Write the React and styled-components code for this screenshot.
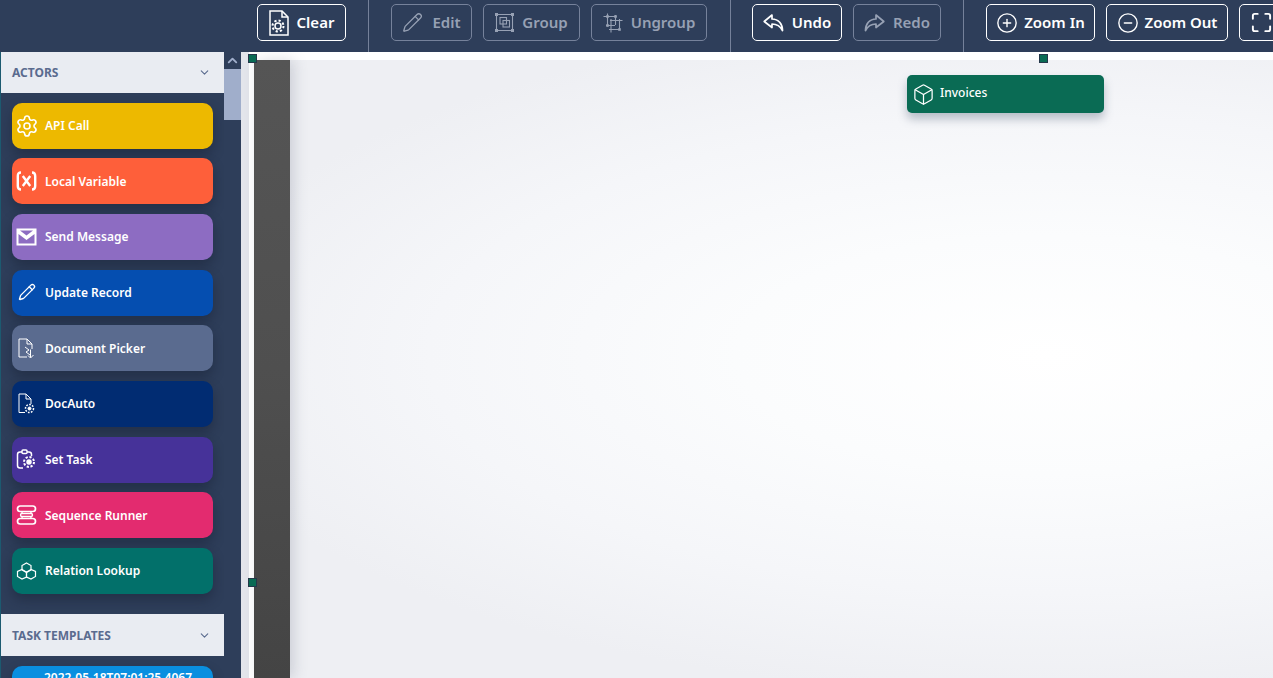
import React from "react";
import styled, { createGlobalStyle } from "styled-components";
import {
  Settings,
  Pencil,
  CirclePlus,
  CircleMinus,
  Maximize,
  Box,
  ChevronDown,
  ChevronUp,
} from "lucide-react";

const GlobalStyle = createGlobalStyle`
  html, body {
    margin: 0;
    height: 100%;
    overflow: hidden;
    font-family: "Noto Sans", "Open Sans", sans-serif;
  }
  #root {
    height: 100%;
  }
`;

const Page = styled.div`
  display: flex;
  flex-direction: column;
  width: 1273px;
  height: 678px;
  overflow: hidden;
  background: #2e3e5a;
`;

const Toolbar = styled.div`
  display: flex;
  flex: 0 0 52px;
  height: 52px;
  padding-left: 257px;
  background: #2e3e5a;
`;

const ToolGroup = styled.div`
  display: flex;
  align-items: flex-start;
  gap: 11px;
  padding: 4px ${(p) => p.$pr || 22}px 0 ${(p) => p.$pl || 22}px;
  border-left: 1px solid #75819a;

  &:first-child {
    padding-left: 0;
    border-left: none;
  }
`;

const ToolButton = styled.button`
  display: flex;
  align-items: center;
  justify-content: center;
  gap: ${(p) => p.$gap || 8}px;
  flex: none;
  box-sizing: border-box;
  height: 37px;
  width: ${(p) => p.$w}px;
  padding: 0 0 2px;
  background: transparent;
  border: 1px solid ${(p) => (p.disabled ? "#76829b" : "#ffffff")};
  border-radius: 5px;
  color: ${(p) => (p.disabled ? "#97a1b4" : "#ffffff")};
  font-family: inherit;
  font-size: 15px;
  font-weight: 600;

  svg {
    flex: none;
    margin-top: 2px;
  }
`;

const Body = styled.div`
  display: flex;
  flex: 1;
  min-height: 0;
`;

const Sidebar = styled.div`
  display: flex;
  flex: 0 0 241px;
  box-sizing: border-box;
  padding-left: 1px;
  overflow: hidden;
  background: #2e3e5a;
  box-shadow: inset 1px 0 0 #1c5a70;
`;

const Panels = styled.div`
  flex: 0 0 223px;
  overflow: hidden;
`;

const PanelHeader = styled.div`
  display: flex;
  align-items: center;
  justify-content: space-between;
  box-sizing: border-box;
  height: ${(p) => p.$h}px;
  padding: ${(p) => (p.$h - 41) * 2}px 13px 0 11px;
  background: #e9ecf2;
  color: #5a6b8f;
  font-size: 12px;
  font-weight: 700;
`;

const ActorList = styled.div`
  display: flex;
  flex-direction: column;
  gap: 9.65px;
  padding: 9.7px 11px 20.1px;
`;

const Actor = styled.div`
  display: flex;
  align-items: center;
  flex: none;
  gap: 8px;
  height: 46px;
  width: 201px;
  box-sizing: border-box;
  padding: 0 0 0.3px 4px;
  background: ${(p) => p.$bg};
  border-radius: 10px;
  box-shadow: 0 6px 12px rgba(20, 28, 45, 0.4);
  color: #ffffff;
  font-size: 12px;
  font-weight: 600;
  line-height: 17px;
`;

const ActorIcon = styled.span`
  display: flex;
  align-items: center;
  justify-content: center;
  flex: 0 0 21px;
  width: 21px;
  height: 24px;

  svg {
    flex: none;
  }
`;

const TemplateActor = styled(Actor)`
  align-items: flex-start;
  padding: 3px 0 0 32px;
  white-space: nowrap;
`;

const Scrollbar = styled.div`
  display: flex;
  flex-direction: column;
  flex: 0 0 17px;
`;

const ScrollUp = styled.div`
  display: flex;
  align-items: center;
  justify-content: center;
  height: 17px;
  color: #a0aecb;
`;

const ScrollThumb = styled.div`
  height: 51px;
  background: #a0aecb;
`;

const Canvas = styled.div`
  position: relative;
  display: flex;
  flex: 1;
  min-width: 0;
  overflow: hidden;
  background: #e3e5eb;
`;

const Sheet = styled.div`
  display: flex;
  flex: 1;
  margin-left: 8px;
  padding: 8px 0 0 5px;
  background: #ffffff;
`;

const Surface = styled.div`
  display: flex;
  flex: 1;
  background: radial-gradient(
    ellipse 880px 340px at 791px 295px,
    #ffffff 0%,
    #fbfcfd 35%,
    #f5f6f9 70%,
    #eeeff3 100%
  );
`;

const Lane = styled.div`
  flex: 0 0 36px;
  background: linear-gradient(#555555, #4f4f4f 50%, #444444);
  box-shadow: 4px 0 14px rgba(80, 90, 115, 0.22);
`;

const Handle = styled.span`
  position: absolute;
  left: ${(p) => p.$x}px;
  top: ${(p) => p.$y}px;
  width: 9px;
  height: 9px;
  box-sizing: border-box;
  background: #0a6b54;
  border: 1px solid #24384a;
`;

const Node = styled.div`
  position: absolute;
  left: 666px;
  top: 23px;
  display: flex;
  align-items: flex-start;
  gap: 5px;
  box-sizing: border-box;
  width: 197px;
  height: 38px;
  padding: 9px 0 0 5px;
  background: #0a6b54;
  border-radius: 5px;
  box-shadow: 0 6px 10px rgba(90, 105, 125, 0.4);
  color: #ffffff;
  font-size: 12px;
  font-weight: 500;
  line-height: 17px;
`;

const NodeIcon = styled(Box)`
  flex: none;
  margin-top: -1px;
`;

const ClearIcon = () => (
  <svg width="20" height="26" viewBox="0 0 20 26" fill="none" stroke="#fff" strokeWidth="1.5">
    <path d="M1 1h12l6 6v18H1z" />
    <path d="M13 1v6h6" />
    <circle cx="9" cy="16" r="3" />
    <circle cx="9" cy="16" r="5.500" strokeDasharray="2.200 2.100" strokeWidth="2" />
  </svg>
);

const UndoIcon = () => (
  <svg width="21" height="18" viewBox="0 0 21 18" fill="none" stroke="currentColor" strokeWidth="1.700" strokeLinejoin="round">
    <path d="M9 1L1.200 7.500 9 13.500V10c4.500 0 8 1.500 10.500 6.500C19.500 10 15.500 5 9 5z" />
  </svg>
);

const RedoIcon = () => (
  <svg width="21" height="18" viewBox="0 0 21 18" fill="none" stroke="currentColor" strokeWidth="1.700" strokeLinejoin="round">
    <path d="M12 1l7.800 6.500L12 13.500V10c-4.500 0-8 1.500-10.500 6.500C1.500 10 5.500 5 12 5z" />
  </svg>
);

const GroupIcon = () => (
  <svg width="19" height="19" viewBox="0 0 19 19" fill="none" stroke="#97a1b4" strokeWidth="1.100">
    <path d="M1.500 1.500h16v16h-16z" />
    <rect x="5" y="4.500" width="6.500" height="6.500" />
    <rect x="8" y="7.500" width="6.500" height="6.500" />
    <g fill="#97a1b4" stroke="none">
      <rect x="0" y="0" width="3" height="3" />
      <rect x="16" y="0" width="3" height="3" />
      <rect x="0" y="16" width="3" height="3" />
      <rect x="16" y="16" width="3" height="3" />
    </g>
  </svg>
);

const UngroupIcon = () => (
  <svg width="20" height="20" viewBox="0 0 20 20" fill="none" stroke="#97a1b4" strokeWidth="1.100">
    <path d="M0.500 3.500h13M4.500 0.500v13M3 12.500h9M12.500 2v10" />
    <path d="M7 7.500h12.500M8 6v13.500M6 16.500h11M16.500 6v11" />
    <g fill="#97a1b4" stroke="none">
      <rect x="3.200" y="2.200" width="2.600" height="2.600" />
      <rect x="11.200" y="2.200" width="2.600" height="2.600" />
      <rect x="3.200" y="11.200" width="2.600" height="2.600" />
      <rect x="15.200" y="15.200" width="2.600" height="2.600" />
    </g>
  </svg>
);

const VariableIcon = () => (
  <svg width="21" height="20" viewBox="0 0 21 20" fill="none" stroke="#fff" strokeWidth="2.400">
    <path d="M5 1.500C2.300 1.500 1.800 3 1.800 5v10c0 2 .5 3.500 3.200 3.500" />
    <path d="M16 1.500c2.700 0 3.200 1.500 3.200 3.500v10c0 2-.5 3.500-3.200 3.500" />
    <path d="M6.800 5l7.400 10M14.200 5L6.800 15" />
  </svg>
);

const MailIcon = () => (
  <svg width="21" height="18" viewBox="0 0 21 18" fill="none">
    <rect x="0.500" y="0.500" width="20" height="17" fill="#fff" />
    <path d="M2.500 6l8 6 8-6v9.500h-16z" fill="#8d6cc2" />
    <path d="M4 2.500h13l-6.500 5z" fill="#8d6cc2" />
  </svg>
);

const DocPickIcon = () => (
  <svg width="18" height="21" viewBox="0 0 18 21" fill="none" stroke="#fff" strokeWidth="1">
    <path d="M9 19H1V1h8l5 5v5" />
    <path d="M9 1v5h5" />
    <path d="M7 9l4 3-3 2 4 3" />
    <path d="M12.500 11.500v8M10 17.500l2.500 2.500 3-3" />
  </svg>
);

const DocGearIcon = () => (
  <svg width="18" height="21" viewBox="0 0 18 21" fill="none" stroke="#fff" strokeWidth="1">
    <path d="M7 19.500H1V1h7l5 5v5" />
    <path d="M8 1v5h5" />
    <circle cx="11.500" cy="15.500" r="1.500" fill="#fff" />
    <circle cx="11.500" cy="15.500" r="4" strokeDasharray="1.700 1.300" strokeWidth="1.500" />
  </svg>
);

const TaskIcon = () => (
  <svg width="21" height="21" viewBox="0 0 21 21" fill="none" stroke="#fff" strokeWidth="1.500">
    <path d="M6 3H4C2.500 3 1.500 4 1.500 5.500v11C1.500 18 2.500 19 4 19h3" />
    <path d="M11 3h2c1.500 0 2.500 1 2.500 2.500V7" />
    <rect x="6" y="1" width="5" height="3.500" rx="1" />
    <circle cx="13" cy="13" r="2" fill="#fff" />
    <circle cx="13" cy="13" r="5" strokeDasharray="2.200 1.700" strokeWidth="2" />
  </svg>
);

const SequenceIcon = () => (
  <svg width="21" height="20" viewBox="0 0 21 20" fill="none" stroke="#fff" strokeWidth="1.700">
    <rect x="1.500" y="1" width="18" height="5.500" rx="2.750" />
    <rect x="1.500" y="13.500" width="18" height="5.500" rx="2.750" />
    <path d="M6 6.500v2H15a1.500 1.500 0 0 1 0 3H6v2M15 6.500v2M15 11.500v2M6 8.500a1.500 1.500 0 0 0 0 3" strokeWidth="1.400" />
  </svg>
);

const RelationIcon = () => (
  <svg width="21" height="18" viewBox="0 0 21 18" fill="none" stroke="#fff" strokeWidth="1.200">
    <path d="M10.500 1l4.500 2.500v4.500l-4.500 2.500L6 8V3.500z" />
    <path d="M6 7.500l4.500 2.500v5l-4.500 2-4.500-2.500v-5z" />
    <path d="M15 7.500L10.500 10v5l4.500 2 4.500-2.500v-5z" />
  </svg>
);

const actors = [
  { name: "API Call", bg: "#edb900", icon: <Settings size={24} strokeWidth={1.600} /> },
  { name: "Local Variable", bg: "#fe5f3a", icon: <VariableIcon /> },
  { name: "Send Message", bg: "#8d6cc2", icon: <MailIcon /> },
  { name: "Update Record", bg: "#054eb0", icon: <Pencil size={18} strokeWidth={1.800} /> },
  { name: "Document Picker", bg: "#5a6b8f", icon: <DocPickIcon /> },
  { name: "DocAuto", bg: "#012c72", icon: <DocGearIcon /> },
  { name: "Set Task", bg: "#463299", icon: <TaskIcon /> },
  { name: "Sequence Runner", bg: "#e32b6f", icon: <SequenceIcon /> },
  { name: "Relation Lookup", bg: "#02706a", icon: <RelationIcon /> },
];

const App = () => {
  return (
    <Page>
      <GlobalStyle />
      <Toolbar>
        <ToolGroup>
          <ToolButton $w={89}>
            <ClearIcon />
            Clear
          </ToolButton>
        </ToolGroup>
        <ToolGroup $pr={23}>
          <ToolButton $w={81} $gap={9} disabled>
            <Pencil size={21} strokeWidth={1.500} />
            Edit
          </ToolButton>
          <ToolButton $w={97} disabled>
            <GroupIcon />
            Group
          </ToolButton>
          <ToolButton $w={116} disabled>
            <UngroupIcon />
            Ungroup
          </ToolButton>
        </ToolGroup>
        <ToolGroup $pl={21}>
          <ToolButton $w={90}>
            <UndoIcon />
            Undo
          </ToolButton>
          <ToolButton $w={88} disabled>
            <RedoIcon />
            Redo
          </ToolButton>
        </ToolGroup>
        <ToolGroup>
          <ToolButton $w={109} $gap={6}>
            <CirclePlus size={22} strokeWidth={1.500} />
            Zoom In
          </ToolButton>
          <ToolButton $w={122} $gap={6}>
            <CircleMinus size={22} strokeWidth={1.500} />
            Zoom Out
          </ToolButton>
          <ToolButton $w={44}>
            <Maximize size={23} strokeWidth={2} />
          </ToolButton>
        </ToolGroup>
      </Toolbar>
      <Body>
        <Sidebar>
          <Panels>
            <PanelHeader $h={41}>
              ACTORS
              <ChevronDown size={13} />
            </PanelHeader>
            <ActorList>
              {actors.map((a) => (
                <Actor key={a.name} $bg={a.bg}>
                  <ActorIcon>{a.icon}</ActorIcon>
                  {a.name}
                </Actor>
              ))}
            </ActorList>
            <PanelHeader $h={42}>
              TASK TEMPLATES
              <ChevronDown size={13} />
            </PanelHeader>
            <ActorList>
              <TemplateActor $bg="#0a8fe0">2022-05-18T07:01:25.4067</TemplateActor>
            </ActorList>
          </Panels>
          <Scrollbar>
            <ScrollUp>
              <ChevronUp size={15} strokeWidth={3} />
            </ScrollUp>
            <ScrollThumb />
          </Scrollbar>
        </Sidebar>
        <Canvas>
          <Sheet>
            <Surface>
              <Lane />
            </Surface>
          </Sheet>
          <Handle $x={7} $y={2} />
          <Handle $x={798} $y={2} />
          <Handle $x={7} $y={526} />
          <Node>
            <NodeIcon size={23} strokeWidth={1.300} />
            Invoices
          </Node>
        </Canvas>
      </Body>
    </Page>
  );
};

export default App;
